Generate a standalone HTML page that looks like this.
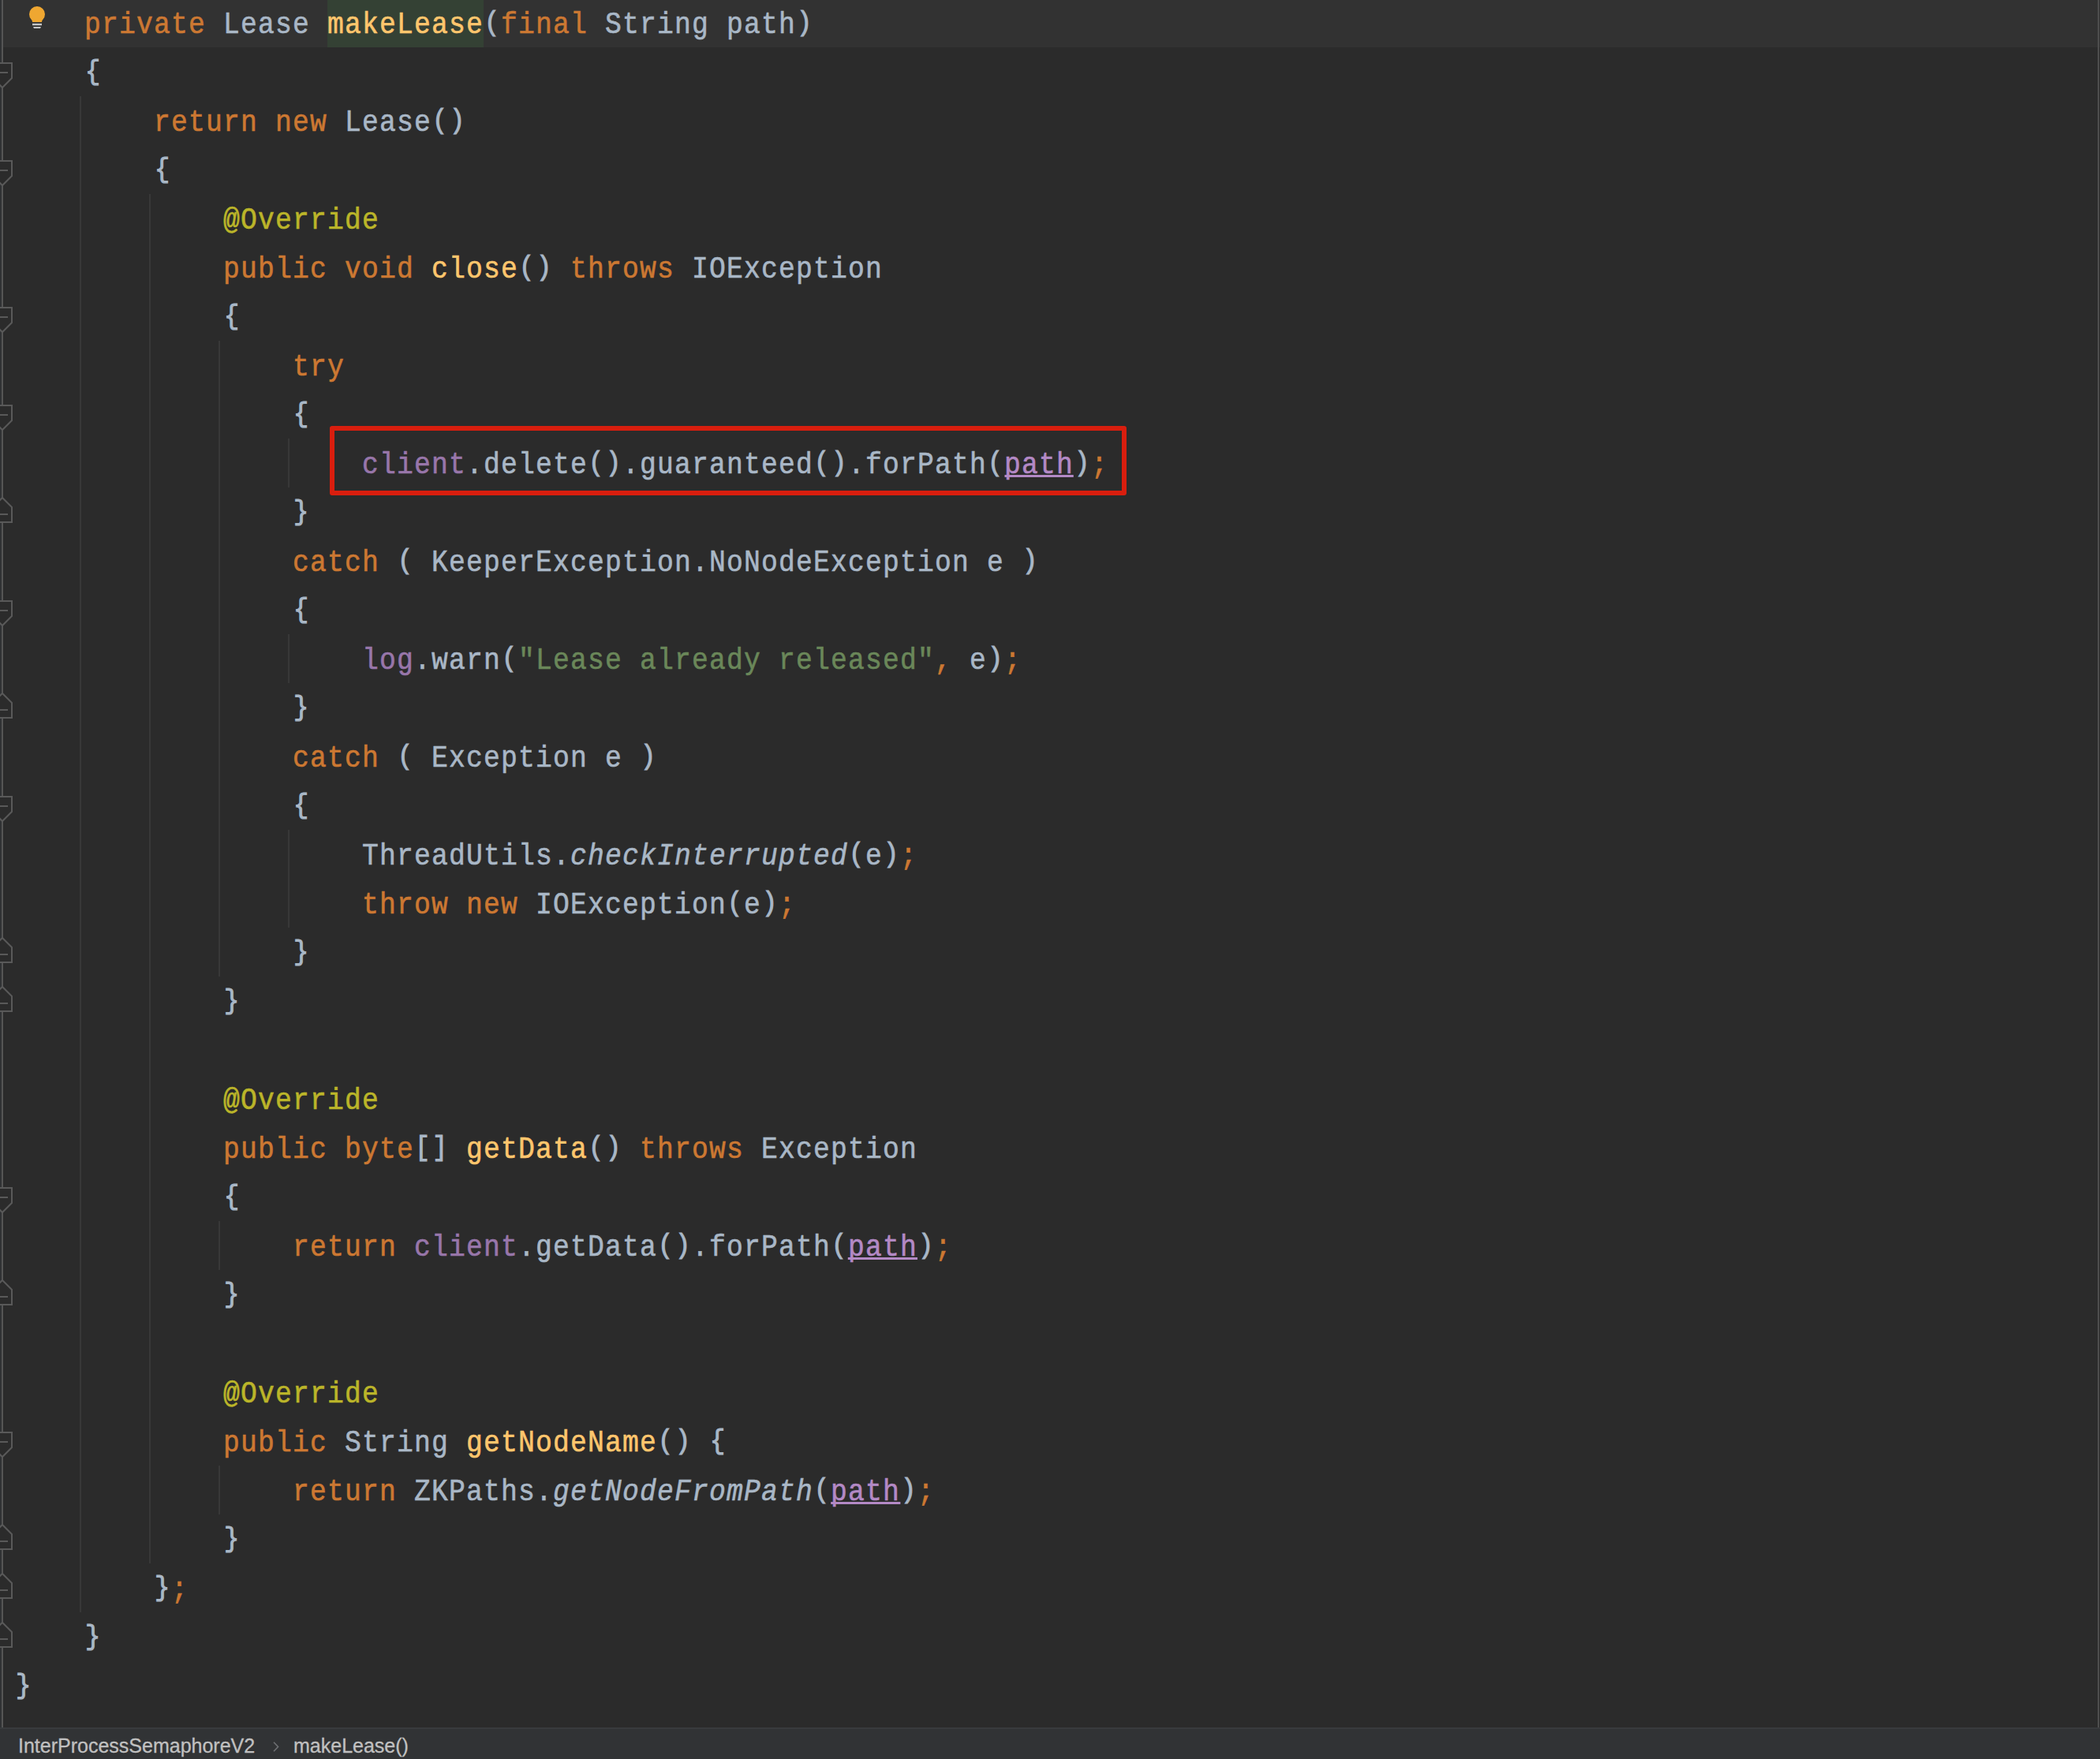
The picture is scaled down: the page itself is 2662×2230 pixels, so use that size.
<!DOCTYPE html>
<html><head><meta charset="utf-8"><style>
html,body{margin:0;padding:0;}
body{width:2662px;height:2230px;overflow:hidden;background:#2B2B2B;position:relative;}
.cur{position:absolute;left:0;top:0;width:2662px;height:60px;background:#323232;}
.hl{position:absolute;left:415px;top:0;width:198px;height:60px;background:#344134;}
.gut{position:absolute;left:0;top:0;width:2px;height:2190px;background:#303234;}
.gl{position:absolute;left:2px;top:0;width:2px;height:2190px;background:#555555;}
.rl{position:absolute;left:2659px;top:0;width:2px;height:2190px;background:#4E4E4E;}
.g{position:absolute;width:2px;background:#383838;}
svg.fold{position:absolute;left:0;top:0;}
.fm{fill:#2B2B2B;stroke:#595959;stroke-width:2;}
.ln{position:absolute;height:62px;line-height:62px;white-space:pre;font-family:"Liberation Mono",monospace;font-size:38.5px;letter-spacing:1.3410px;transform:scaleX(0.9);transform-origin:0 0;color:#A9B7C6;-webkit-text-stroke:0.6px currentColor;}
.k{color:#CC7832} .t{color:#A9B7C6} .m{color:#FFC66D} .a{color:#BBB529} .f{color:#9876AA} .s{color:#6A8759}
.p{color:#B389C5;position:relative;} .p::after{content:'';position:absolute;left:0;width:97.778px;top:34px;height:3px;background:#B389C5;}
.i{font-style:italic}
.ln b{font-weight:normal;font-size:35.5px;letter-spacing:3.1412px;position:relative;top:-3px;left:1px;-webkit-text-stroke:1.1px currentColor;}
.box{position:absolute;left:418px;top:540px;width:1010px;height:88px;box-sizing:border-box;border:6px solid #D91E0E;border-radius:3px;}
.bc{position:absolute;left:0;top:2190px;width:2662px;height:40px;background:#313335;border-top:2px solid #393B3D;box-sizing:border-box;font-family:"Liberation Sans",sans-serif;font-size:25px;color:#C0C0C0;-webkit-text-stroke:0.3px currentColor;}
.bc span{position:absolute;top:6px;line-height:30px;white-space:pre;}
</style></head><body>
<div class="cur"></div>
<div class="hl"></div>
<div class="gut"></div>
<div class="gl"></div>
<div class="rl"></div>
<div class="g" style="left:101px;top:122px;height:1922px"></div><div class="g" style="left:189px;top:246px;height:1736px"></div><div class="g" style="left:277px;top:432px;height:806px"></div><div class="g" style="left:277px;top:1548px;height:62px"></div><div class="g" style="left:277px;top:1858px;height:62px"></div><div class="g" style="left:365px;top:556px;height:62px"></div><div class="g" style="left:365px;top:804px;height:62px"></div><div class="g" style="left:365px;top:1052px;height:124px"></div>
<svg class="fold" width="70" height="2230" viewBox="0 0 70 2230"><path d="M-9 80H15V99L3 111L-9 99Z" class="fm"/><path d="M-6 92H10" class="fm"/><path d="M-9 204H15V223L3 235L-9 223Z" class="fm"/><path d="M-6 216H10" class="fm"/><path d="M-9 390H15V409L3 421L-9 409Z" class="fm"/><path d="M-6 402H10" class="fm"/><path d="M-9 514H15V533L3 545L-9 533Z" class="fm"/><path d="M-6 526H10" class="fm"/><path d="M-9 762H15V781L3 793L-9 781Z" class="fm"/><path d="M-6 774H10" class="fm"/><path d="M-9 1010H15V1029L3 1041L-9 1029Z" class="fm"/><path d="M-6 1022H10" class="fm"/><path d="M-9 1506H15V1525L3 1537L-9 1525Z" class="fm"/><path d="M-6 1518H10" class="fm"/><path d="M-9 1816H15V1835L3 1847L-9 1835Z" class="fm"/><path d="M-6 1828H10" class="fm"/><path d="M-9 662H15V643L3 631L-9 643Z" class="fm"/><path d="M-6 652H10" class="fm"/><path d="M-9 910H15V891L3 879L-9 891Z" class="fm"/><path d="M-6 900H10" class="fm"/><path d="M-9 1220H15V1201L3 1189L-9 1201Z" class="fm"/><path d="M-6 1210H10" class="fm"/><path d="M-9 1282H15V1263L3 1251L-9 1263Z" class="fm"/><path d="M-6 1272H10" class="fm"/><path d="M-9 1654H15V1635L3 1623L-9 1635Z" class="fm"/><path d="M-6 1644H10" class="fm"/><path d="M-9 1964H15V1945L3 1933L-9 1945Z" class="fm"/><path d="M-6 1954H10" class="fm"/><path d="M-9 2026H15V2007L3 1995L-9 2007Z" class="fm"/><path d="M-6 2016H10" class="fm"/><path d="M-9 2088H15V2069L3 2057L-9 2069Z" class="fm"/><path d="M-6 2078H10" class="fm"/>
<g><circle cx="47" cy="18" r="10" fill="#EFA731"/><path d="M38.5 22 Q41 26 41 28 H53 Q53 26 55.5 22 Z" fill="#EFA731"/><rect x="41" y="29.8" width="12" height="2.4" fill="#C4C5C7"/><path d="M42 34 H52 L51 36 H43 Z" fill="#C4C5C7"/></g>
</svg>
<div class="ln" style="top:1px;left:107px"><span class="k">private</span><span class="t"> Lease </span><span class="m">makeLease</span><span class="t"><b>(</b></span><span class="k">final</span><span class="t"> String path<b>)</b></span></div><div class="ln" style="top:63px;left:107px"><span class="t"><b>{</b></span></div><div class="ln" style="top:125px;left:195px"><span class="k">return new</span><span class="t"> Lease<b>(</b><b>)</b></span></div><div class="ln" style="top:187px;left:195px"><span class="t"><b>{</b></span></div><div class="ln" style="top:249px;left:283px"><span class="a">@Override</span></div><div class="ln" style="top:311px;left:283px"><span class="k">public void</span><span class="t"> </span><span class="m">close</span><span class="t"><b>(</b><b>)</b> </span><span class="k">throws</span><span class="t"> IOException</span></div><div class="ln" style="top:373px;left:283px"><span class="t"><b>{</b></span></div><div class="ln" style="top:435px;left:371px"><span class="k">try</span></div><div class="ln" style="top:497px;left:371px"><span class="t"><b>{</b></span></div><div class="ln" style="top:559px;left:459px"><span class="f">client</span><span class="t">.delete<b>(</b><b>)</b>.guaranteed<b>(</b><b>)</b>.forPath<b>(</b></span><span class="p">path</span><span class="t"><b>)</b></span><span class="k">;</span></div><div class="ln" style="top:621px;left:371px"><span class="t"><b>}</b></span></div><div class="ln" style="top:683px;left:371px"><span class="k">catch</span><span class="t"> <b>(</b> KeeperException.NoNodeException e <b>)</b></span></div><div class="ln" style="top:745px;left:371px"><span class="t"><b>{</b></span></div><div class="ln" style="top:807px;left:459px"><span class="f">log</span><span class="t">.warn<b>(</b></span><span class="s">&quot;Lease already released&quot;</span><span class="k">,</span><span class="t"> e<b>)</b></span><span class="k">;</span></div><div class="ln" style="top:869px;left:371px"><span class="t"><b>}</b></span></div><div class="ln" style="top:931px;left:371px"><span class="k">catch</span><span class="t"> <b>(</b> Exception e <b>)</b></span></div><div class="ln" style="top:993px;left:371px"><span class="t"><b>{</b></span></div><div class="ln" style="top:1055px;left:459px"><span class="t">ThreadUtils.</span><span class="i">checkInterrupted</span><span class="t"><b>(</b>e<b>)</b></span><span class="k">;</span></div><div class="ln" style="top:1117px;left:459px"><span class="k">throw new</span><span class="t"> IOException<b>(</b>e<b>)</b></span><span class="k">;</span></div><div class="ln" style="top:1179px;left:371px"><span class="t"><b>}</b></span></div><div class="ln" style="top:1241px;left:283px"><span class="t"><b>}</b></span></div><div class="ln" style="top:1365px;left:283px"><span class="a">@Override</span></div><div class="ln" style="top:1427px;left:283px"><span class="k">public byte</span><span class="t"><b>[</b><b>]</b> </span><span class="m">getData</span><span class="t"><b>(</b><b>)</b> </span><span class="k">throws</span><span class="t"> Exception</span></div><div class="ln" style="top:1489px;left:283px"><span class="t"><b>{</b></span></div><div class="ln" style="top:1551px;left:371px"><span class="k">return</span><span class="t"> </span><span class="f">client</span><span class="t">.getData<b>(</b><b>)</b>.forPath<b>(</b></span><span class="p">path</span><span class="t"><b>)</b></span><span class="k">;</span></div><div class="ln" style="top:1613px;left:283px"><span class="t"><b>}</b></span></div><div class="ln" style="top:1737px;left:283px"><span class="a">@Override</span></div><div class="ln" style="top:1799px;left:283px"><span class="k">public</span><span class="t"> String </span><span class="m">getNodeName</span><span class="t"><b>(</b><b>)</b> <b>{</b></span></div><div class="ln" style="top:1861px;left:371px"><span class="k">return</span><span class="t"> ZKPaths.</span><span class="i">getNodeFromPath</span><span class="t"><b>(</b></span><span class="p">path</span><span class="t"><b>)</b></span><span class="k">;</span></div><div class="ln" style="top:1923px;left:283px"><span class="t"><b>}</b></span></div><div class="ln" style="top:1985px;left:195px"><span class="t"><b>}</b></span><span class="k">;</span></div><div class="ln" style="top:2047px;left:107px"><span class="t"><b>}</b></span></div><div class="ln" style="top:2109px;left:19px"><span class="t"><b>}</b></span></div>
<div class="box"></div>
<div class="bc"><span style="left:23px">InterProcessSemaphoreV2</span><svg style="position:absolute;left:340px;top:12px" width="20" height="24"><path d="M7 4.8L12.5 10.5L7 16.3" fill="none" stroke="#6E7073" stroke-width="1.6"/></svg><span style="left:372px">makeLease()</span></div>
</body></html>
